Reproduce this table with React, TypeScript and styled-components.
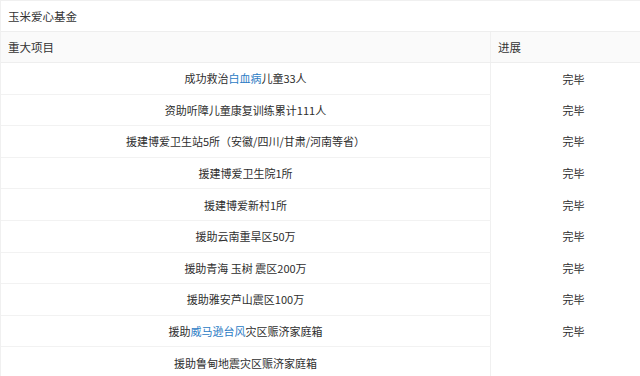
import { FC } from "react"
import styled, { createGlobalStyle } from "styled-components"

const GlobalStyle = createGlobalStyle`
  html, body {
    margin: 0;
    padding: 0;
    background: #fff;
    overflow: hidden;
  }
  body {
    font-family: "Noto Sans CJK SC", "Noto Sans", sans-serif;
    color: #333;
  }
`

const Panel = styled.div`
  width: 658px;
  border: 1px solid #f0f0f0;
  border-bottom: none;
  box-sizing: border-box;
`

const Title = styled.div`
  height: 30px;
  line-height: 30px;
  padding-left: 7px;
  font-size: 11.5px;
  color: #333;
  border-bottom: 1px solid #eee;
`

const Table = styled.table`
  width: 100%;
  border-collapse: collapse;
  table-layout: fixed;
  font-size: 11px;
`

const HeadCell = styled.th<{ $w?: number }>`
  width: ${(p) => (p.$w ? `${p.$w}px` : "auto")};
  height: 30px;
  padding: 0 7px;
  text-align: left;
  font-weight: normal;
  background: #fafafa;
  border-bottom: 1px solid #eee;
  border-right: 1px solid #f0f0f0;
  font-size: 11.5px;
`

const Cell = styled.td<{ $last?: boolean }>`
  height: 30.6px;
  padding: 0 7px;
  text-align: center;
  color: #2e2e2e;
  border-bottom: ${(p) => (p.$last ? "none" : "1px solid #f2f2f2")};
  border-right: 1px solid #f0f0f0;
`

const Link = styled.span`
  color: #2b7bc4;
`

type Row = { item: React.ReactNode; status: string }

const rows: Row[] = [
  { item: <>成功救治<Link>白血病</Link>儿童33人</>, status: "完毕" },
  { item: "资助听障儿童康复训练累计111人", status: "完毕" },
  { item: "援建博爱卫生站5所（安徽/四川/甘肃/河南等省）", status: "完毕" },
  { item: "援建博爱卫生院1所", status: "完毕" },
  { item: "援建博爱新村1所", status: "完毕" },
  { item: "援助云南重旱区50万", status: "完毕" },
  { item: "援助青海 玉树 震区200万", status: "完毕" },
  { item: "援助雅安芦山震区100万", status: "完毕" },
  { item: <>援助<Link>威马逊台风</Link>灾区赈济家庭箱</>, status: "完毕" },
  { item: "援助鲁甸地震灾区赈济家庭箱", status: "" },
]

const App: FC = () => {
  return (
    <>
      <GlobalStyle />
      <Panel>
        <Title>玉米爱心基金</Title>
        <Table>
          <thead>
            <tr>
              <HeadCell $w={475}>重大项目</HeadCell>
              <HeadCell>进展</HeadCell>
            </tr>
          </thead>
          <tbody>
            {rows.map((r, i) => (
              <tr key={i}>
                <Cell $last={i === rows.length - 1}>{r.item}</Cell>
                <Cell $last>{r.status}</Cell>
              </tr>
            ))}
          </tbody>
        </Table>
      </Panel>
    </>
  )
}

export default App
